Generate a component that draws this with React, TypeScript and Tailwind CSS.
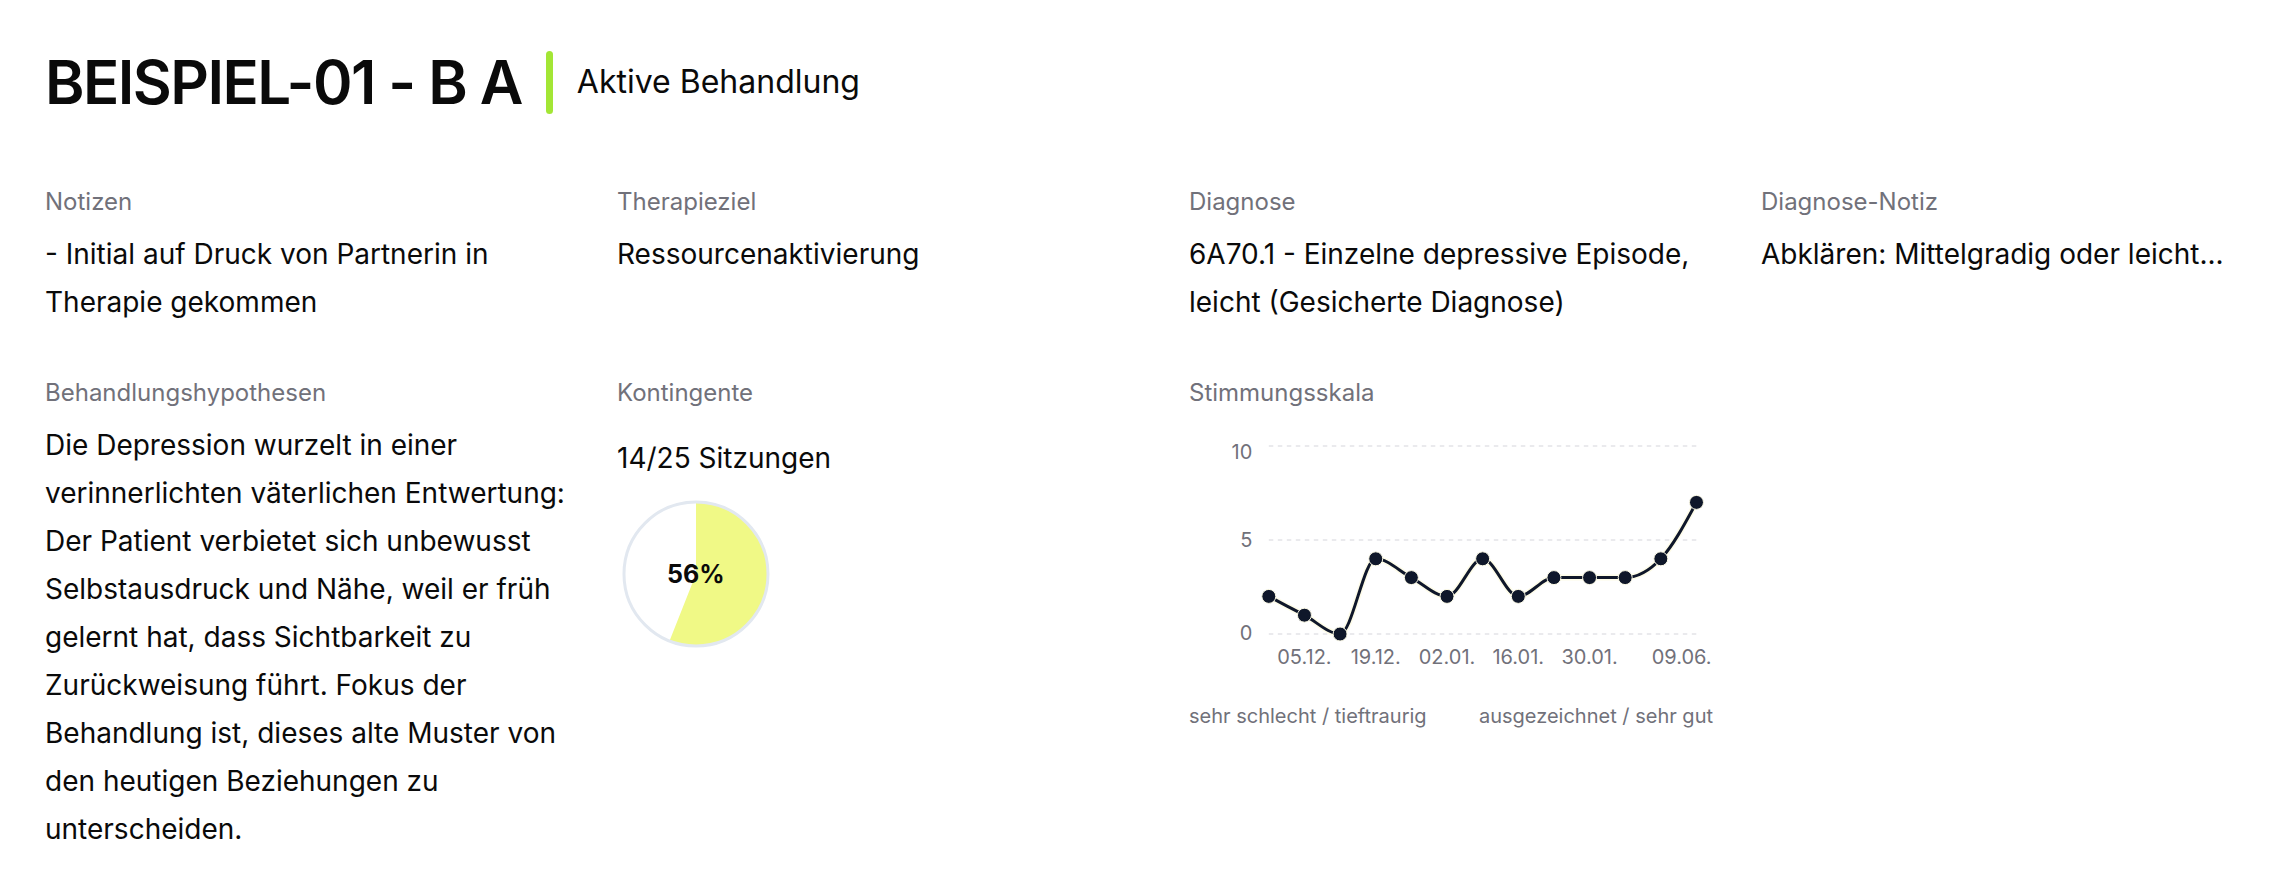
import React from "react";

const values = [2, 1, 0, 4, 3, 2, 4, 2, 3, 3, 3, 4, 7];
const X0 = 79.8;
const STEP = 35.64;
const Y0 = 204;
const UNIT = 18.8;

function sign(x: number) {
  return x < 0 ? -1 : 1;
}

function monotonePath(pts: [number, number][]) {
  const n = pts.length;
  const t: number[] = new Array(n).fill(0);
  for (let i = 1; i < n - 1; i++) {
    const [x0, y0] = pts[i - 1];
    const [x1, y1] = pts[i];
    const [x2, y2] = pts[i + 1];
    const h0 = x1 - x0;
    const h1 = x2 - x1;
    const s0 = (y1 - y0) / h0;
    const s1 = (y2 - y1) / h1;
    const p = (s0 * h1 + s1 * h0) / (h0 + h1);
    t[i] = (sign(s0) + sign(s1)) * Math.min(Math.abs(s0), Math.abs(s1), 0.5 * Math.abs(p)) || 0;
  }
  const h = pts[1][0] - pts[0][0];
  t[0] = ((3 * (pts[1][1] - pts[0][1])) / h - t[1]) / 2;
  const hl = pts[n - 1][0] - pts[n - 2][0];
  t[n - 1] = ((3 * (pts[n - 1][1] - pts[n - 2][1])) / hl - t[n - 2]) / 2;
  let d = `M${pts[0][0]},${pts[0][1]}`;
  for (let i = 0; i < n - 1; i++) {
    const [x0, y0] = pts[i];
    const [x1, y1] = pts[i + 1];
    const dx = (x1 - x0) / 3;
    d += ` C${x0 + dx},${y0 + dx * t[i]} ${x1 - dx},${y1 - dx * t[i + 1]} ${x1},${y1}`;
  }
  return d;
}

function MoodChart() {
  const pts: [number, number][] = values.map((v, i) => [X0 + i * STEP, Y0 - v * UNIT]);
  const xRight = X0 + (values.length - 1) * STEP;
  const path = monotonePath(pts);
  const ticks = [
    { i: 1, label: "05.12." },
    { i: 3, label: "19.12." },
    { i: 5, label: "02.01." },
    { i: 7, label: "16.01." },
    { i: 9, label: "30.01." },
  ];
  return (
    <svg width="524" height="271" viewBox="0 0 524 271" className="block overflow-visible text-[20px] fill-[#71717a]">
      {[16, 110, 204].map((y) => (
        <line key={y} x1={X0} x2={xRight} y1={y} y2={y} stroke="#e4e4e7" strokeWidth="1.5" strokeDasharray="4.5 4.5" />
      ))}
      <text x="63.3" y="29.3" textAnchor="end">10</text>
      <text x="63.3" y="116.7" textAnchor="end">5</text>
      <text x="63.3" y="210" textAnchor="end">0</text>
      {ticks.map((t) => (
        <text key={t.label} x={X0 + t.i * STEP} y="234" textAnchor="middle">
          {t.label}
        </text>
      ))}
      <text x="522.5" y="234" textAnchor="end">09.06.</text>
      <path d={path} fill="none" stroke="#fefce8" strokeWidth="6" strokeLinejoin="round" />
      <path d={path} fill="none" stroke="#0f172a" strokeWidth="3" strokeLinejoin="round" />
      {pts.map(([x, y], i) => (
        <circle key={i} cx={x} cy={y} r="7" fill="#0f172a" stroke="#fefce8" strokeWidth="1" />
      ))}
    </svg>
  );
}

function Pie() {
  const cx = 74;
  const cy = 74;
  const r = 72;
  const a = 0.56 * Math.PI * 2;
  const ex = cx + r * Math.sin(a);
  const ey = cy - r * Math.cos(a);
  const large = a > Math.PI ? 1 : 0;
  return (
    <svg width="148" height="148" viewBox="0 0 148 148" className="block ml-[5px] mt-[22px]">
      <circle cx={cx} cy={cy} r={r} fill="#ffffff" />
      <path d={`M${cx},${cy} L${cx},${cy - r} A${r},${r} 0 ${large} 1 ${ex},${ey} Z`} fill="#f0f986" />
      <circle cx={cx} cy={cy} r={r} fill="none" stroke="#e2e8f0" strokeWidth="3" />
      <text x="73.8" y="83.3" textAnchor="middle" className="fill-[#0a0a0a] text-[25px] font-bold">
        56%
      </text>
    </svg>
  );
}

function Label({ children }: { children: React.ReactNode }) {
  return <div className="text-[24px] leading-[32px] text-[#71717a]">{children}</div>;
}

function Body({ children }: { children: React.ReactNode }) {
  return <div className="mt-3 text-[28px] leading-[48px] text-[#0a0a0a]">{children}</div>;
}

export default function App() {
  return (
    <div className="w-full min-h-[876px] overflow-hidden bg-white pl-[45px] pt-[50px] font-['Inter','Noto_Sans',sans-serif]">
      <div className="flex items-center gap-6">
        <h1 className="text-[60px] leading-[64px] font-semibold text-[#0a0a0a] tracking-[-0.026em] whitespace-nowrap">
          BEISPIEL-01 - B A
        </h1>
        <div className="w-[7px] h-[63px] rounded-full bg-[#a3e635]" />
        <div className="text-[32px] leading-[48px] text-[#0a0a0a] whitespace-nowrap">Aktive Behandlung</div>
      </div>

      <div className="mt-[72px] grid grid-cols-[repeat(4,530px)] gap-x-[42px] gap-y-[51px]">
        <div>
          <Label>Notizen</Label>
          <Body>- Initial auf Druck von Partnerin in Therapie gekommen</Body>
        </div>
        <div>
          <Label>Therapieziel</Label>
          <Body>Ressourcenaktivierung</Body>
        </div>
        <div>
          <Label>Diagnose</Label>
          <Body>6A70.1 - Einzelne depressive Episode, leicht (Gesicherte Diagnose)</Body>
        </div>
        <div>
          <Label>Diagnose-Notiz</Label>
          <Body>Abklären: Mittelgradig oder leicht...</Body>
        </div>

        <div>
          <Label>Behandlungshypothesen</Label>
          <Body>
            Die Depression wurzelt in einer verinnerlichten väterlichen Entwertung: Der Patient verbietet sich
            unbewusst Selbstausdruck und Nähe, weil er früh gelernt hat, dass Sichtbarkeit zu Zurückweisung führt.
            Fokus der Behandlung ist, dieses alte Muster von den heutigen Beziehungen zu unterscheiden.
          </Body>
        </div>
        <div>
          <Label>Kontingente</Label>
          <div className="mt-[29px] text-[28px] leading-[40px] text-[#0a0a0a]">14/25 Sitzungen</div>
          <Pie />
        </div>
        <div>
          <Label>Stimmungsskala</Label>
          <div className="mt-[21px] w-[524px]">
            <MoodChart />
            <div className="flex justify-between text-[20px] leading-[30px] text-[#71717a]">
              <span>sehr schlecht / tieftraurig</span>
              <span>ausgezeichnet / sehr gut</span>
            </div>
          </div>
        </div>
        <div />
      </div>
    </div>
  );
}
